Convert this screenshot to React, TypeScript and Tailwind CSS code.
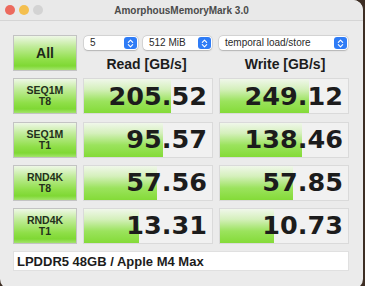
import React from "react"

type Row = {
  name: string
  threads: string
  read: string
  readBar: number
  write: string
  writeBar: number
}

const rows: Row[] = [
  { name: "SEQ1M", threads: "T8", read: "205.52", readBar: 87, write: "249.12", writeBar: 89 },
  { name: "SEQ1M", threads: "T1", read: "95.57", readBar: 79, write: "138.46", writeBar: 82 },
  { name: "RND4K", threads: "T8", read: "57.56", readBar: 73, write: "57.85", writeBar: 73 },
  { name: "RND4K", threads: "T1", read: "13.31", readBar: 55, write: "10.73", writeBar: 54 }
]

const greenButton =
  "border border-[#c3c3c3] bg-[linear-gradient(to_bottom,#eef7e6_0%,#c2ec9c_30%,#8fdf48_70%,#7fd834_88%,#a3e46c_100%)]"

const Stepper = () => (
  <div className="w-[13px] h-[12px] rounded-[3px] bg-[#2f7cf6] flex items-center justify-center">
    <svg width="7" height="9" viewBox="0 0 7 9" fill="none">
      <path d="M1.3 3.3L3.5 1.2L5.7 3.3" stroke="white" strokeWidth="1.1" strokeLinecap="round" strokeLinejoin="round" />
      <path d="M1.3 5.7L3.5 7.8L5.7 5.7" stroke="white" strokeWidth="1.1" strokeLinecap="round" strokeLinejoin="round" />
    </svg>
  </div>
)

const Select = ({ label, className }: { label: string; className: string }) => (
  <div
    className={`h-[14px] bg-white rounded-[4px] shadow-[0_0_0_0.5px_rgba(0,0,0,0.14),0_0.5px_1.5px_rgba(0,0,0,0.18)] flex items-center justify-between pl-[6px] pr-[1px] text-[10px] text-[#2a2a2a] ${className}`}>
    <span className="leading-none">{label}</span>
    <Stepper />
  </div>
)

const ResultCell = ({ value, bar }: { value: string; bar: number }) => (
  <div className="relative h-[36px] border border-[#dadada] bg-[#f1f1f1] overflow-hidden">
    <div
      className="absolute left-0 top-0 bottom-0 bg-[linear-gradient(to_bottom,#f0f7ea_0%,#d5f0bc_30%,#9be35d_65%,#84db38_100%)]"
      style={{ width: bar }}
    />
    <div className="relative h-full flex items-center justify-end pr-[5px]">
      <span className="font-['DejaVu_Sans',sans-serif] font-bold text-[25.5px] leading-none text-[#1c1c1c]">
        {value}
      </span>
    </div>
  </div>
)

export default function App() {
  return (
    <div className="w-[365px] h-[286px] bg-[#3d2e24] overflow-hidden font-['Liberation_Sans',Arial,sans-serif]">
      <div className="w-[363px] h-[289px] bg-[#ebebeb] rounded-tr-[10px] rounded-br-[10px] rounded-bl-[10px] overflow-hidden">
        <div className="h-[21px] bg-[#e9e9e9] border-b border-[#d5d5d5] grid grid-cols-[1fr_auto_1fr] items-center">
          <div className="flex items-center gap-[4px] pl-[5px]">
            <div className="w-[10px] h-[10px] rounded-full bg-[#ec6a5e]" />
            <div className="w-[10px] h-[10px] rounded-full bg-[#f4bf4f]" />
            <div className="w-[10px] h-[10px] rounded-full bg-[#d3d3d3]" />
          </div>
          <div className="text-[10px] font-bold text-[#4b4b4b]">AmorphousMemoryMark 3.0</div>
          <div />
        </div>

        <div className="pt-[14px] pl-[13px]">
          <div className="grid grid-cols-[64px_130px_130px] gap-x-[6px] gap-y-[7.25px]">
            <div className={`h-[36px] ${greenButton} flex items-center justify-center`}>
              <span className="text-[14px] font-bold text-[#1e2a18]">All</span>
            </div>
            <div className="h-[36px] flex flex-col justify-between pt-[1px]">
              <div className="flex gap-[5px] pl-[1px]">
                <Select label="5" className="w-[54px]" />
                <Select label="512 MiB" className="w-[69px]" />
              </div>
              <div className="text-center text-[14px] leading-[14px] font-bold text-[#1c1c1c] pr-[3px]">
                Read [GB/s]
              </div>
            </div>
            <div className="h-[36px] flex flex-col justify-between pt-[1px]">
              <Select label="temporal load/store" className="w-[129px]" />
              <div className="text-center text-[14px] leading-[14px] font-bold text-[#1c1c1c] pl-[2px]">
                Write [GB/s]
              </div>
            </div>

            {rows.map((r, i) => (
              <React.Fragment key={i}>
                <div className={`h-[36px] ${greenButton} flex flex-col items-center justify-center`}>
                  <span className="text-[10.5px] leading-[11px] font-bold text-[#23301c]">{r.name}</span>
                  <span className="text-[10.5px] leading-[11px] font-bold text-[#23301c]">{r.threads}</span>
                </div>
                <ResultCell value={r.read} bar={r.readBar} />
                <ResultCell value={r.write} bar={r.writeBar} />
              </React.Fragment>
            ))}

            <div className="col-span-3 h-[20px] bg-white border border-[#e0e0e0] flex items-center pl-[3px]">
              <span className="text-[13px] font-bold text-[#1c1c1c]">LPDDR5 48GB / Apple M4 Max</span>
            </div>
          </div>
        </div>
      </div>
    </div>
  )
}
